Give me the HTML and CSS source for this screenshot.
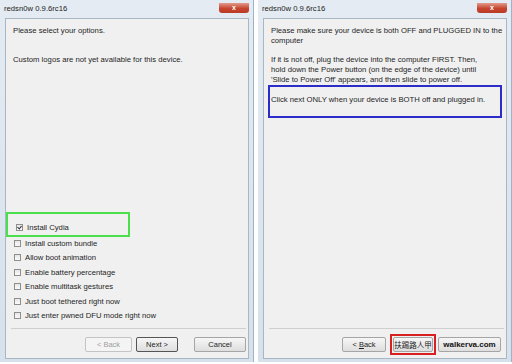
FILE: index.html
```html
<!DOCTYPE html>
<html lang="en">
<head>
  <meta charset="UTF-8">
  <title>redsn0w steps</title>
  <link rel="stylesheet" href="styles.css">
</head>
<body>
  <div class="shots">
    <!-- Step 1: options -->
    <div class="window">
      <div class="titlebar">
        <span class="title">redsn0w 0.9.6rc16</span>
        <span class="close">x</span>
      </div>
      <div class="panel">
        <div class="body">
          <p>Please select your options.</p>
          <p class="gap-big">Custom logos are not yet available for this device.</p>
          <ul class="options">
            <li class="mark-green"><span class="check on"></span>Install Cydia</li>
            <li><span class="check"></span>Install custom bundle</li>
            <li><span class="check"></span>Allow boot animation</li>
            <li><span class="check"></span>Enable battery percentage</li>
            <li><span class="check"></span>Enable multitask gestures</li>
            <li><span class="check"></span>Just boot tethered right now</li>
            <li><span class="check"></span>Just enter pwned DFU mode right now</li>
          </ul>
        </div>
        <div class="footer">
          <button class="btn disabled">&lt; Back</button>
          <button class="btn default">Next &gt;</button>
          <button class="btn cancel">Cancel</button>
        </div>
      </div>
    </div>

    <!-- Step 2: power off -->
    <div class="window">
      <div class="titlebar">
        <span class="title">redsn0w 0.9.6rc16</span>
        <span class="close">x</span>
      </div>
      <div class="panel">
        <div class="body">
          <p>Please make sure your device is both OFF and PLUGGED IN to the<br>computer</p>
          <p class="gap">If it is not off, plug the device into the computer FIRST. Then,<br>hold down the Power button (on the edge of the device) until<br>'Slide to Power Off' appears, and then slide to power off.</p>
          <p class="mark-blue">Click next ONLY when your device is BOTH off and plugged in.</p>
        </div>
        <div class="footer">
          <button class="btn">&lt; <u>B</u>ack</button>
          <span class="mark-red"><button class="btn zh">扶踢路人甲</button></span>
          <button class="btn cancel stamp">walkerva.com</button>
        </div>
      </div>
    </div>
  </div>
</body>
</html>
```

FILE: styles.css
```css
* {
  box-sizing: border-box;
}

body {
  margin: 0;
  background: #ffffff;
  font-family: "Liberation Sans", "Noto Sans CJK SC", sans-serif;
  font-size: 7.7px;
  color: #1e1e1e;
}

.shots {
  display: flex;
  gap: 4px;
  height: 364px;
  padding-bottom: 2px;
}

.window {
  flex: 0 0 254px;
  min-width: 0;
  display: flex;
  flex-direction: column;
  background: linear-gradient(#e4ebf2, #d6e1ec);
  border-right: 1px solid #9fb3c8;
  padding: 0 4px 3px 5px;
}

.titlebar {
  height: 18px;
  display: flex;
  align-items: flex-start;
  justify-content: space-between;
}

.title {
  margin-top: 4px;
  margin-left: -1px;
  font-size: 7.7px;
  color: #222;
}

.close {
  margin-top: 3px;
  width: 30px;
  height: 10px;
  border-radius: 0 0 3px 3px;
  background: linear-gradient(#e29a8c, #c7452f 55%, #b83a26);
  color: #fff;
  font-size: 7px;
  font-weight: bold;
  text-align: center;
  line-height: 9px;
}

.panel {
  flex: 1;
  display: flex;
  flex-direction: column;
  background: #f0f0f0;
  border: 1px solid #a9b6c3;
}

.body {
  flex: 1;
  padding: 7px 7px 0 7px;
}

.body p {
  margin: 0;
  line-height: 10px;
  white-space: nowrap;
}

.gap-big {
  margin-top: 19px !important;
}

.gap {
  margin-top: 9px !important;
}

.mark-blue {
  margin: 0 -3px 0 -3px !important;
  border: 2px solid #2c2cc8;
  height: 33px;
  padding: 8px 1px;
}

.options {
  list-style: none;
  margin: 147px 0 0 -7px;
  padding: 0;
}

.options li {
  display: flex;
  align-items: center;
  height: 14.5px;
  padding-left: 8px;
}

.options .mark-green {
  width: 124px;
  height: 25px;
  border: 2px solid #4be04b;
  margin-bottom: -1px;
  padding-top: 5px;
}

.check {
  width: 7px;
  height: 7px;
  margin-right: 4px;
  border: 1px solid #8e8e8e;
  background: linear-gradient(#e6e6e6, #fbfbfb);
  position: relative;
}

.check.on::after {
  content: "";
  position: absolute;
  left: 1px;
  top: 0;
  width: 2px;
  height: 3px;
  border: solid #333;
  border-width: 0 1px 1px 0;
  transform: rotate(40deg);
}

.footer {
  margin: 0 2px 0 5px;
  padding: 7px 0 5px;
  border-top: 1px solid #cfcfcf;
  display: flex;
  justify-content: flex-end;
  align-items: center;
  gap: 4px;
  height: 30px;
}

.btn {
  font-family: inherit;
  font-size: 7.5px;
  width: 44px;
  height: 15px;
  padding: 0;
  white-space: nowrap;
  color: #1e1e1e;
  background: linear-gradient(#f6f6f6, #dedede);
  border: 1px solid #a5a5a5;
  border-radius: 2px;
}

.btn.disabled {
  color: #a0a0a0;
  border-color: #c4c4c4;
  background: #f4f4f4;
  width: 47px;
}

.btn.default {
  border-color: #555;
  width: 42px;
}

.btn.cancel {
  width: 52px;
  margin-left: 12px;
}

.mark-red {
  border: 2px solid #d92020;
  padding: 1px;
  display: flex;
}

.btn.zh {
  font-size: 7.5px;
  width: 40px;
}

.btn.stamp {
  width: 63px;
  margin-left: -2px;
  margin-right: 3px;
  font-size: 8px;
  font-weight: bold;
  color: #111;
}
```
